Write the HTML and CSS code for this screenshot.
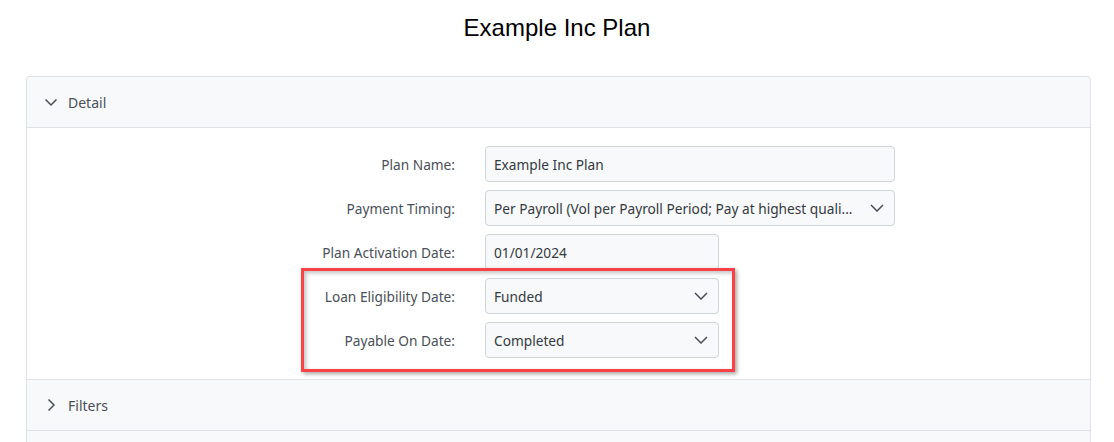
FILE: index.html
```html
<!DOCTYPE html>
<html lang="en">
<head>
<meta charset="utf-8">
<title>Example Inc Plan</title>
<link rel="stylesheet" href="styles.css">
</head>
<body>
<h1 class="page-title">Example Inc Plan</h1>
<div class="accordion">
  <div class="acc-header acc-first">
    <svg class="acc-icon" width="14" height="14" viewBox="0 0 14 14"><path d="M1.5 4.5 L7 10 L12.5 4.5" fill="none" stroke="#495057" stroke-width="1.5"/></svg>
    <span class="acc-title">Detail</span>
  </div>
  <div class="acc-body">
    <div class="form-row">
      <label class="form-label">Plan Name:</label>
      <div class="control control-wide">Example Inc Plan</div>
    </div>
    <div class="form-row">
      <label class="form-label">Payment Timing:</label>
      <div class="control control-wide control-select"><span class="control-text">Per Payroll (Vol per Payroll Period; Pay at highest quali...</span>
        <svg class="caret" width="14" height="8" viewBox="0 0 14 8"><path d="M1 1 L7 7 L13 1" fill="none" stroke="#495057" stroke-width="1.5"/></svg></div>
    </div>
    <div class="form-row">
      <label class="form-label">Plan Activation Date:</label>
      <div class="control control-narrow">01/01/2024</div>
    </div>
    <div class="highlight-group">
      <div class="form-row">
        <label class="form-label">Loan Eligibility Date:</label>
        <div class="control control-narrow control-select"><span class="control-text">Funded</span>
          <svg class="caret" width="14" height="8" viewBox="0 0 14 8"><path d="M1 1 L7 7 L13 1" fill="none" stroke="#495057" stroke-width="1.5"/></svg></div>
      </div>
      <div class="form-row">
        <label class="form-label">Payable On Date:</label>
        <div class="control control-narrow control-select"><span class="control-text">Completed</span>
          <svg class="caret" width="14" height="8" viewBox="0 0 14 8"><path d="M1 1 L7 7 L13 1" fill="none" stroke="#495057" stroke-width="1.5"/></svg></div>
      </div>
      <div class="annotation-box"></div>
    </div>
  </div>
  <div class="acc-header">
    <svg class="acc-icon" width="14" height="14" viewBox="0 0 14 14"><path d="M4.5 1.5 L10 7 L4.5 12.5" fill="none" stroke="#495057" stroke-width="1.5"/></svg>
    <span class="acc-title">Filters</span>
  </div>
  <div class="acc-header"></div>
</div>
</body>
</html>
```

FILE: styles.css
```css
html, body {
  margin: 0;
  padding: 0;
  background: #ffffff;
}

body {
  font-family: "Noto Sans", "Open Sans", sans-serif;
  font-size: 13.7px;
  color: #495057;
}

.page-title {
  margin: 0;
  padding-top: 13px;
  height: 76px;
  box-sizing: border-box;
  text-align: center;
  font-family: "Liberation Sans", Arial, sans-serif;
  font-size: 24px;
  font-weight: normal;
  line-height: 30px;
  color: #000000;
}

.accordion {
  margin: 0 23px 0 26px;
  border: 1px solid #dee2e6;
  border-bottom: none;
  border-radius: 4px 4px 0 0;
}

.acc-header {
  display: flex;
  align-items: center;
  height: 50px;
  padding-left: 17px;
  background: #f8f9fa;
  border-bottom: 1px solid #dee2e6;
}

.acc-first {
  border-radius: 4px 4px 0 0;
}

.acc-icon {
  margin-right: 10px;
  flex: none;
}

.acc-title {
  font-size: 14px;
  color: #495057;
}

.acc-body {
  padding: 18px 0 21px;
  display: flex;
  flex-direction: column;
  gap: 8px;
  border-bottom: 1px solid #dee2e6;
}

.highlight-group {
  position: relative;
  display: flex;
  flex-direction: column;
  gap: 8px;
}

.form-row {
  display: flex;
  align-items: center;
  gap: 30px;
}

.form-label {
  width: 428px;
  text-align: right;
  flex: none;
  color: #495057;
}

.control {
  box-sizing: border-box;
  height: 36px;
  display: flex;
  align-items: center;
  padding: 0 8px;
  background: #f8f9fa;
  border: 1px solid #ced4da;
  border-radius: 4px;
  color: #343a40;
  white-space: nowrap;
  overflow: hidden;
}

.control-wide {
  width: 410px;
}

.control-narrow {
  width: 234px;
}

.control-select {
  justify-content: space-between;
  padding-right: 10px;
}

.control-text {
  overflow: hidden;
}

.caret {
  flex: none;
  margin-left: 8px;
}

.annotation-box {
  position: absolute;
  left: 274px;
  top: -10px;
  width: 434px;
  height: 104px;
  box-sizing: border-box;
  border: 3px solid #fa4146;
  box-shadow: 2px 2px 4px rgba(0, 0, 0, 0.35), inset 2px 2px 4px rgba(0, 0, 0, 0.25);
  pointer-events: none;
}
```
